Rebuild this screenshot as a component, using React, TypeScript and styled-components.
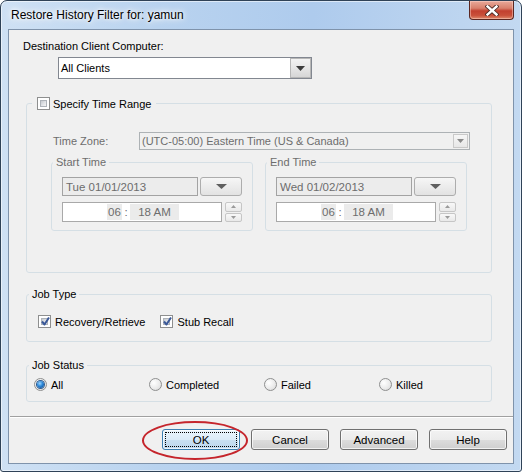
import React from 'react';
import styled, { createGlobalStyle } from 'styled-components';

const Global = createGlobalStyle`
  html, body { margin: 0; padding: 0; background: #ffffff; }
  body {
    width: 522px; height: 472px; overflow: hidden;
    font-family: "Liberation Sans", Arial, sans-serif;
    font-size: 11px; color: #000;
  }
  * { box-sizing: border-box; }
`;

const Window = styled.div`
  width: 522px;
  height: 472px;
  border: 1px solid #2f4257;
  border-radius: 7px 7px 3px 3px;
  background: linear-gradient(90deg, #cfe1f4 0%, #b9d3ef 30%, #aecbed 60%, #c3d9f1 100%);
  box-shadow: inset 0 0 0 1px rgba(255, 255, 255, 0.55);
  display: flex;
  flex-direction: column;
  overflow: hidden;
`;

const TitleBar = styled.div`
  height: 28px;
  flex: none;
  display: flex;
  align-items: flex-start;
  justify-content: space-between;
  padding-right: 7px;
`;

const TitleText = styled.div`
  margin: 7px 0 0 10px;
  font-family: "Liberation Sans", Arial, sans-serif;
  font-size: 12px;
  line-height: 15px;
  color: #000;
  text-shadow: 0 0 6px #fff, 0 0 10px #fff, 0 0 3px rgba(255, 255, 255, 0.9);
`;

const CloseButton = styled.div`
  width: 45px;
  height: 19px;
  border: 1px solid #5b2721;
  border-top: none;
  border-radius: 0 0 4px 4px;
  background: linear-gradient(180deg, #e9a99a 0%, #d8806c 40%, #c2402f 55%, #c9503a 80%, #df8a6c 100%);
  box-shadow: inset 0 0 0 1px rgba(255, 220, 210, 0.45);
  display: flex;
  align-items: center;
  justify-content: center;
`;

const Client = styled.div`
  flex: 1;
  margin: 0 7px 7px 7px;
  border: 1px solid #7f93ab;
  background: #f0f0f0;
  display: flex;
  flex-direction: column;
`;

const FieldLabel = styled.div`
  margin: 9px 0 0 14px;
  line-height: 14px;
`;

const Combo = styled.div`
  margin: 4px 0 0 49px;
  width: 254px;
  height: 22px;
  border: 1px solid #828790;
  background: #fff;
  display: flex;
  align-items: stretch;
`;

const ComboText = styled.div`
  flex: 1;
  padding-left: 2px;
  display: flex;
  align-items: center;
`;

const ComboButton = styled.div`
  width: 21px;
  border: 1px solid #b7b7b7;
  background: linear-gradient(180deg, #f3f3f3 0%, #e6e6e6 50%, #d6d6d6 100%);
  display: flex;
  align-items: center;
  justify-content: center;
`;

const Group = styled.fieldset<{ $mt: number }>`
  margin: ${(p) => p.$mt}px 0 0 17px;
  width: 466px;
  padding: 0;
  min-width: 0;
  border: 1px solid #d5dfe5;
  border-radius: 3px;
`;

const SubGroup = styled.fieldset`
  margin: 0;
  width: 202px;
  padding: 0;
  min-width: 0;
  border: 1px solid #d5dfe5;
  border-radius: 3px;
`;

const Legend = styled.legend<{ $ml: number; $px: number; $muted?: boolean }>`
  margin-left: ${(p) => p.$ml}px;
  padding: 0 ${(p) => p.$px}px;
  height: 14px;
  line-height: 14px;
  color: ${(p) => (p.$muted ? '#6d6d6d' : '#000')};
`;

const LegendInner = styled.span`
  display: inline-flex;
  align-items: center;
  gap: 3px;
  height: 14px;
`;

const TimeRangeBody = styled.div`
  padding: 22px 0 41px 24px;
  display: flex;
  flex-direction: column;
`;

const ZoneRow = styled.div`
  display: flex;
  align-items: center;
  margin-bottom: 5px;
`;

const MutedLabel = styled.div`
  margin-left: 2px;
  width: 86px;
  color: #6d6d6d;
`;

const DisabledCombo = styled.div`
  width: 331px;
  height: 18px;
  border: 1px solid #adb2b5;
  background: #f0f0f0;
  display: flex;
  align-items: stretch;
  color: #6d6d6d;
`;

const DisabledComboText = styled.div`
  flex: 1;
  padding-left: 2px;
  display: flex;
  align-items: center;
`;

const SmallComboButton = styled.div`
  width: 15px;
  margin: 1px;
  border: 1px solid #c9c9c9;
  background: linear-gradient(180deg, #f6f6f6, #e7e7e7);
  display: flex;
  align-items: center;
  justify-content: center;
`;

const PairRow = styled.div`
  display: flex;
  gap: 12px;
`;

const SubBody = styled.div`
  padding: 8px 10px 8px 10px;
  display: flex;
  flex-direction: column;
  gap: 6px;
`;

const Row = styled.div`
  display: flex;
  align-items: stretch;
`;

const DateField = styled.div`
  width: 137px;
  height: 19px;
  border: 1px solid #a3a3a3;
  background: #ececec;
  color: #6d6d6d;
  padding-left: 3px;
  display: flex;
  align-items: center;
  font-size: 11.5px;
`;

const DateButton = styled.div`
  width: 42px;
  height: 19px;
  margin-left: 2px;
  border: 1px solid #adadad;
  border-radius: 3px;
  background: linear-gradient(180deg, #f6f6f6 0%, #ececec 50%, #e2e2e2 100%);
  display: flex;
  align-items: center;
  justify-content: center;
`;

const TimeField = styled.div`
  width: 162px;
  height: 20px;
  border: 1px solid #a9a9a9;
  background: #fff;
  padding-left: 44px;
  display: flex;
  align-items: center;
  color: #6d6d6d;
  font-size: 11.5px;
`;

const Segment = styled.span<{ $w: number }>`
  width: ${(p) => p.$w}px;
  height: 16px;
  background: #ebebeb;
  display: inline-flex;
  align-items: center;
  justify-content: center;
`;

const Colon = styled.span`
  width: 8px;
  text-align: center;
`;

const Spinner = styled.div`
  width: 17px;
  height: 20px;
  margin-left: 3px;
  display: flex;
  flex-direction: column;
  gap: 1px;
`;

const SpinHalf = styled.div`
  flex: 1;
  border: 1px solid #c6c6c6;
  border-radius: 2px;
  background: linear-gradient(180deg, #f8f8f8, #e9e9e9);
  display: flex;
  align-items: center;
  justify-content: center;
`;

const JobTypeBody = styled.div`
  padding: 13px 11px 12px 11px;
  display: flex;
  gap: 15px;
`;

const OptionItem = styled.label`
  display: inline-flex;
  align-items: center;
  gap: 4px;
  height: 15px;
`;

const StatusBody = styled.div`
  padding: 5px 7px 9px 7px;
  display: grid;
  grid-template-columns: 115px 115px 115px 115px;
`;

const Box = styled.span`
  width: 13px;
  height: 13px;
  min-width: 13px;
  min-height: 13px;
  flex: none;
  border: 1px solid #8e8f8f;
  padding: 2px;
  background: #fff;
  display: inline-flex;
`;

const BoxInner = styled.span`
  flex: 1;
  border: 1px solid #aeb3b9;
  background: linear-gradient(135deg, #c5c9cf 0%, #e2e4e7 55%, #f4f4f4 100%);
  position: relative;
`;

const CheckMark = styled.svg`
  position: absolute;
  left: -2px;
  top: -3px;
`;

const RadioCircle = styled.span`
  width: 13px;
  height: 13px;
  flex: none;
  border-radius: 50%;
  border: 1px solid #8e8f8f;
  background: radial-gradient(circle at 35% 35%, #ffffff 0%, #e9e9e9 60%, #d2d2d2 100%);
  display: inline-flex;
  align-items: center;
  justify-content: center;
`;

const RadioDot = styled.span`
  width: 7px;
  height: 7px;
  border-radius: 50%;
  background: radial-gradient(circle at 40% 35%, #9fd6ff 0%, #2b87d8 45%, #0a3f84 100%);
  box-shadow: 0 0 0 1px #2d5a8f;
`;

const Separator = styled.div`
  margin: 14px 0 0 1px;
  height: 1px;
  background: #a0a0a0;
  box-shadow: 0 1px 0 #ffffff;
`;

const ButtonRow = styled.div`
  margin-top: 12px;
  display: flex;
  justify-content: flex-end;
  gap: 11px;
  padding-right: 6px;
`;

const Button = styled.div<{ $focused?: boolean }>`
  position: relative;
  width: 78px;
  height: 21px;
  border: 1px solid ${(p) => (p.$focused ? '#3c7fb1' : '#707070')};
  border-radius: 3px;
  background: ${(p) =>
    p.$focused
      ? 'linear-gradient(180deg, #eaf5fc 0%, #dcecf8 50%, #c9e0f2 51%, #bcd7ee 100%)'
      : 'linear-gradient(180deg, #f2f2f2 0%, #ebebeb 50%, #dddddd 51%, #cfcfcf 100%)'};
  box-shadow: inset 0 0 0 1px rgba(255, 255, 255, 0.7);
  display: flex;
  align-items: center;
  justify-content: center;
  font-size: 11.5px;
  color: #000;
`;

const FocusRect = styled.span`
  position: absolute;
  inset: 2px;
  border: 1px dotted #000;
  pointer-events: none;
`;

const Annotation = styled.span`
  position: absolute;
  left: -21px;
  top: -9px;
  width: 106px;
  height: 39px;
  border: 2px solid #c5252c;
  border-radius: 50%;
  pointer-events: none;
`;

const Arrow = ({ w, h, color }: { w: number; h: number; color: string }) => (
  <svg width={w} height={h} viewBox={`0 0 ${w} ${h}`}>
    <polygon points={`0,0 ${w},0 ${w / 2},${h}`} fill={color} />
  </svg>
);

const UpArrow = ({ color }: { color: string }) => (
  <svg width={5} height={3} viewBox="0 0 5 3">
    <polygon points="0,3 5,3 2.5,0" fill={color} />
  </svg>
);

const Checkbox = ({ checked }: { checked?: boolean }) => (
  <Box>
    <BoxInner>
      {checked && (
        <CheckMark width={11} height={11} viewBox="0 0 11 11">
          <path d="M2 5.5 L4.5 8.5 L9 1.5" fill="none" stroke="#3b5998" strokeWidth={2} strokeLinejoin="round" />
        </CheckMark>
      )}
    </BoxInner>
  </Box>
);

const Radio = ({ selected }: { selected?: boolean }) => (
  <RadioCircle>{selected && <RadioDot />}</RadioCircle>
);

const TimeSpinner = () => (
  <Spinner>
    <SpinHalf>
      <UpArrow color="#9a9a9a" />
    </SpinHalf>
    <SpinHalf>
      <Arrow w={5} h={3} color="#9a9a9a" />
    </SpinHalf>
  </Spinner>
);

const DateTimeGroup = ({ title, date }: { title: string; date: string }) => (
  <SubGroup>
    <Legend $ml={1} $px={3} $muted>
      {title}
    </Legend>
    <SubBody>
      <Row>
        <DateField>{date}</DateField>
        <DateButton>
          <Arrow w={11} h={5} color="#5f5f5f" />
        </DateButton>
      </Row>
      <Row>
        <TimeField>
          <Segment $w={15}>06</Segment>
          <Colon>:</Colon>
          <Segment $w={49}>18 AM</Segment>
        </TimeField>
        <TimeSpinner />
      </Row>
    </SubBody>
  </SubGroup>
);

export default function App() {
  return (
    <>
      <Global />
      <Window>
        <TitleBar>
          <TitleText>Restore History Filter for: yamun</TitleText>
          <CloseButton>
            <svg width={14} height={11} viewBox="0 0 14 11">
              <path d="M2.5 1.5 L11.5 9.5 M11.5 1.5 L2.5 9.5" stroke="#4a2a25" strokeWidth={4.2} strokeLinecap="square" />
              <path d="M2.5 1.5 L11.5 9.5 M11.5 1.5 L2.5 9.5" stroke="#ffffff" strokeWidth={2.4} strokeLinecap="square" />
            </svg>
          </CloseButton>
        </TitleBar>
        <Client>
          <FieldLabel>Destination Client Computer:</FieldLabel>
          <Combo>
            <ComboText>All Clients</ComboText>
            <ComboButton>
              <Arrow w={9} h={5} color="#3c3c3c" />
            </ComboButton>
          </Combo>

          <Group $mt={17}>
            <Legend $ml={5} $px={5}>
              <LegendInner>
                <Checkbox />
                <span>Specify Time Range</span>
              </LegendInner>
            </Legend>
            <TimeRangeBody>
              <ZoneRow>
                <MutedLabel>Time Zone:</MutedLabel>
                <DisabledCombo>
                  <DisabledComboText>(UTC-05:00) Eastern Time (US &amp; Canada)</DisabledComboText>
                  <SmallComboButton>
                    <Arrow w={7} h={4} color="#8a8a8a" />
                  </SmallComboButton>
                </DisabledCombo>
              </ZoneRow>
              <PairRow>
                <DateTimeGroup title="Start Time" date="Tue 01/01/2013" />
                <DateTimeGroup title="End Time" date="Wed 01/02/2013" />
              </PairRow>
            </TimeRangeBody>
          </Group>

          <Group $mt={14}>
            <Legend $ml={2} $px={3}>
              Job Type
            </Legend>
            <JobTypeBody>
              <OptionItem>
                <Checkbox checked />
                <span>Recovery/Retrieve</span>
              </OptionItem>
              <OptionItem>
                <Checkbox checked />
                <span>Stub Recall</span>
              </OptionItem>
            </JobTypeBody>
          </Group>

          <Group $mt={16}>
            <Legend $ml={2} $px={3}>
              Job Status
            </Legend>
            <StatusBody>
              <OptionItem>
                <Radio selected />
                <span>All</span>
              </OptionItem>
              <OptionItem>
                <Radio />
                <span>Completed</span>
              </OptionItem>
              <OptionItem>
                <Radio />
                <span>Failed</span>
              </OptionItem>
              <OptionItem>
                <Radio />
                <span>Killed</span>
              </OptionItem>
            </StatusBody>
          </Group>

          <Separator />
          <ButtonRow>
            <Button $focused>
              OK
              <FocusRect />
              <Annotation />
            </Button>
            <Button>Cancel</Button>
            <Button>Advanced</Button>
            <Button>Help</Button>
          </ButtonRow>
        </Client>
      </Window>
    </>
  );
}
